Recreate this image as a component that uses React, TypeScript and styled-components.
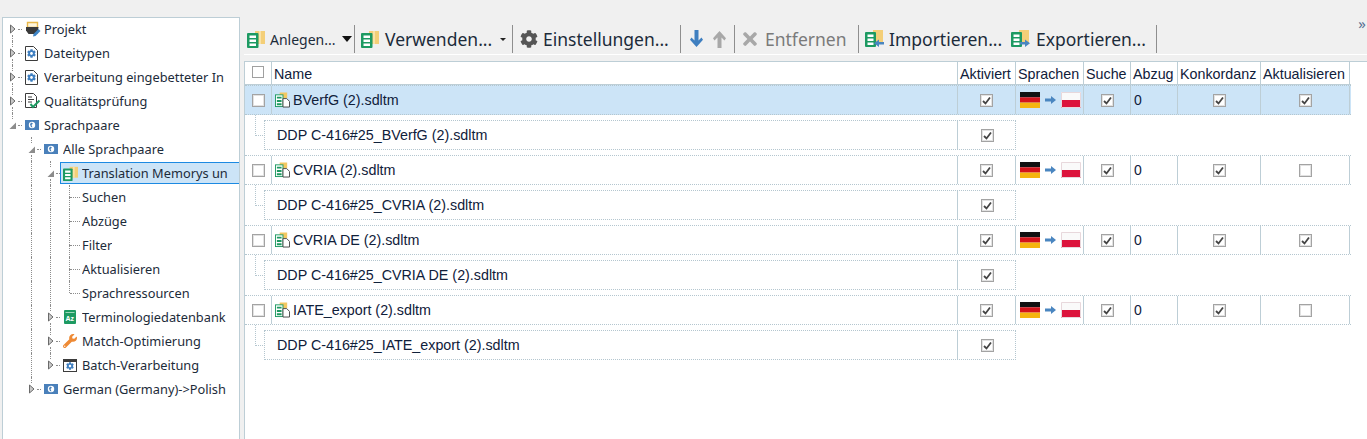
import React from "react";
import styled, { createGlobalStyle } from "styled-components";
import { FaCog, FaTimes, FaWrench } from "react-icons/fa";

const GlobalStyle = createGlobalStyle`
  html, body { margin: 0; padding: 0; background: #f0f0f0; }
  #root { height: 439px; overflow: hidden; }
`;

const UI_FONT = `"Noto Sans", "Open Sans", sans-serif`;
const TABLE_FONT = `"Liberation Sans", Arial, sans-serif`;
const BORDER = "#bdced6";
const DOTS = "#b4c6cf";
const COLUMNS = "27px 686px 58px 68px 47px 47px 83px 89px";

/* ---------- icons ---------- */

const TmIcon: React.FC<{ size?: number }> = ({ size = 18 }) => (
  <svg width={size} height={size} viewBox="0 0 18 18">
    <path d="M8 1h10v13H8z" fill="#f4cf78" />
    <path d="M12 1h2v13h-2z" fill="#f9e2a8" />
    <rect x="0" y="3" width="11.500" height="15" rx="1" fill="#1d9a62" />
    <path d="M2.500 5.500h6.500v2.500H2.500zM2.500 9.500h6.500v2.500H2.500zM2.500 13.500h6.500v2.500H2.500z" fill="#fff" />
  </svg>
);

const TmFileIcon: React.FC = () => (
  <svg width="15" height="16" viewBox="0 0 16 16">
    <path d="M5 0h8v6H5z" fill="#f3c862" />
    <rect x="0.500" y="2.500" width="8" height="12.500" fill="#fff" stroke="#1d9a62" />
    <path d="M2 4.500h5v2H2zM2 8h5v2H2zM2 11.500h5v2H2z" fill="#1d9a62" />
    <path d="M8.500 6.500h4l3 3v6h-7z" fill="#fff" stroke="#444" />
  </svg>
);

const TransferIcon: React.FC<{ dir: "in" | "out" }> = ({ dir }) => (
  <svg width="19" height="18" viewBox="0 0 19 18">
    <path d="M8 0h10v13H8z" fill="#f4cf78" />
    <rect x="0" y="2" width="11" height="15" rx="1" fill="#1d9a62" />
    <path d="M2.500 4.500h6v2.500h-6zM2.500 8.500h6v2.500h-6zM2.500 12.500h6v2.500h-6z" fill="#fff" />
    {dir === "in" ? (
      <path d="M19 12v2.500h-5v2.500l-5-3.750 5-3.750V12z" fill="#4a86c0" />
    ) : (
      <path d="M9 12v2.500h5v2.500l5-3.750-5-3.750V12z" fill="#4a86c0" />
    )}
  </svg>
);

const ProjectIcon: React.FC = () => (
  <svg width="16" height="16" viewBox="0 0 16 16">
    <path d="M2.500 1.500h10v5h-10z" fill="#fff6dc" stroke="#e9b84a" strokeWidth="1.400" />
    <path d="M1 6h12.500l-1 7H3.500L1 9.500z" fill="#3a3a3a" />
    <path d="M8.500 13l5-5 2 2-5 5-2.500.5z" fill="#3f85c5" />
  </svg>
);

const DocGearIcon: React.FC = () => (
  <IconFrame>
    <svg width="13" height="15" viewBox="0 0 13 15">
      <path d="M.5.5h8l4 4v10H.5z" fill="#fff" stroke="#3c3c3c" />
    </svg>
    <OverlayGear />
  </IconFrame>
);

const CheckDocIcon: React.FC = () => (
  <svg width="16" height="16" viewBox="0 0 16 16">
    <path d="M.5.500h8l3 3v11H.5z" fill="#fff" stroke="#3c3c3c" />
    <path d="M3 4h4M3 6.500h6M3 9h4" stroke="#3c3c3c" />
    <path d="M5.500 11l2.500 3 6.500-6.500" fill="none" stroke="#1d9a62" strokeWidth="2" />
  </svg>
);

const GlobeIcon: React.FC = () => (
  <svg width="14" height="10" viewBox="0 0 14 10">
    <rect width="14" height="10" fill="#4a80ba" />
    <circle cx="7" cy="5" r="3.200" fill="#fff" />
    <path d="M6 2.500l2 1-1.500 1.500 1 2.500-1.500-.5-1-2.500z" fill="#4a80ba" />
  </svg>
);

const TermIcon: React.FC = () => (
  <svg width="14" height="14" viewBox="0 0 14 14">
    <rect x="1" width="12" height="14" rx="1" fill="#1d9a62" />
    <path d="M2.500 2.500h9" stroke="#9fd8bb" />
    <text x="2.500" y="11" fontSize="7" fontFamily="Liberation Sans" fontWeight="700" fill="#fff">Az</text>
  </svg>
);

const BatchIcon: React.FC = () => (
  <IconFrame>
    <svg width="14" height="13" viewBox="0 0 14 13">
      <rect x=".5" y=".5" width="13" height="12" fill="#fff" stroke="#3c3c3c" />
      <path d="M0 0h14v3H0z" fill="#3c3c3c" />
    </svg>
    <BatchGear />
  </IconFrame>
);

const ThickArrow: React.FC<{ dir: "up" | "down"; color: string }> = ({ dir, color }) => (
  <svg width="13" height="18" viewBox="0 0 13 18">
    <path
      d="M4.500 0h4v10.500l3-3 1.500 2.200L6.500 17 0 9.700l1.500-2.200 3 3z"
      fill={color}
      transform={dir === "up" ? "rotate(180 6.500 9)" : undefined}
    />
  </svg>
);

const GermanFlag: React.FC = () => (
  <Flag viewBox="0 0 20 16">
    <path d="M0 0h20v5.300H0z" fill="#111" />
    <path d="M0 5.300h20v5.300H0z" fill="#d3141c" />
    <path d="M0 10.600h20V16H0z" fill="#f5b50f" />
  </Flag>
);

const PolishFlag: React.FC = () => (
  <Flag viewBox="0 0 20 16">
    <path d="M0 0h20v8H0z" fill="#fafafa" />
    <path d="M0 8h20v8H0z" fill="#dc143c" />
    <path d="M.5.500h19v15H.5z" fill="none" stroke="#e8d8dc" />
  </Flag>
);

const LangArrow: React.FC = () => (
  <svg width="11" height="8" viewBox="0 0 11 8">
    <path d="M0 2.500h6V0l5 4-5 4V5.500H0z" fill="#4a86c0" />
  </svg>
);

const Check: React.FC = () => (
  <svg width="9" height="9" viewBox="0 0 9 9">
    <path d="M1 5l2.500 2.500L8 1.500" fill="none" stroke="#444" strokeWidth="1.800" />
  </svg>
);

/* ---------- tree ---------- */

type TreeItem = {
  label: string;
  level: number;
  guides: boolean[];
  state?: "open" | "closed";
  up?: boolean;
  down?: boolean;
  icon?: React.ReactNode;
  selected?: boolean;
};

const treeItems: TreeItem[] = [
  { label: "Projekt", level: 0, guides: [], state: "closed", down: true, icon: <ProjectIcon /> },
  { label: "Dateitypen", level: 0, guides: [], state: "closed", up: true, down: true, icon: <DocGearIcon /> },
  { label: "Verarbeitung eingebetteter In", level: 0, guides: [], state: "closed", up: true, down: true, icon: <DocGearIcon /> },
  { label: "Qualitätsprüfung", level: 0, guides: [], state: "closed", up: true, down: true, icon: <CheckDocIcon /> },
  { label: "Sprachpaare", level: 0, guides: [], state: "open", up: true, icon: <GlobeIcon /> },
  { label: "Alle Sprachpaare", level: 1, guides: [false], state: "open", up: true, down: true, icon: <GlobeIcon /> },
  { label: "Translation Memorys un", level: 2, guides: [false, true], state: "open", up: true, down: true, icon: <TmIcon size={15} />, selected: true },
  { label: "Suchen", level: 3, guides: [false, true, true], up: true, down: true },
  { label: "Abzüge", level: 3, guides: [false, true, true], up: true, down: true },
  { label: "Filter", level: 3, guides: [false, true, true], up: true, down: true },
  { label: "Aktualisieren", level: 3, guides: [false, true, true], up: true, down: true },
  { label: "Sprachressourcen", level: 3, guides: [false, true, true], up: true },
  { label: "Terminologiedatenbank", level: 2, guides: [false, true], state: "closed", up: true, down: true, icon: <TermIcon /> },
  { label: "Match-Optimierung", level: 2, guides: [false, true], state: "closed", up: true, down: true, icon: <FaWrench size={14} color="#ee8a35" /> },
  { label: "Batch-Verarbeitung", level: 2, guides: [false, true], state: "closed", up: true, icon: <BatchIcon /> },
  { label: "German (Germany)->Polish", level: 1, guides: [false], state: "closed", up: true, icon: <GlobeIcon /> },
];

const Twisty: React.FC<{ state: "open" | "closed" }> = ({ state }) => (
  <TwistyBox>
    <svg width="8" height="10" viewBox="0 0 8 10">
      {state === "closed" ? (
        <path d="M1.500 1l4.500 4-4.500 4z" fill="#c8c8c8" stroke="#6a6a6a" />
      ) : (
        <path d="M7 2.500V9H.5z" fill="#8c8c8c" />
      )}
    </svg>
  </TwistyBox>
);

const TreeRow: React.FC<{ item: TreeItem }> = ({ item }) => (
  <Row>
    {item.guides.map((line, i) => (
      <Guide key={i} $line={line} />
    ))}
    <Connector>
      {item.up && <StemUp $full={!item.state} />}
      {item.down && <StemDown $full={!item.state} />}
      <Branch $leaf={!item.state} />
      {item.state && <Twisty state={item.state} />}
    </Connector>
    <Content $selected={item.selected}>
      {item.icon && <IconSlot>{item.icon}</IconSlot>}
      <Label>{item.label}</Label>
    </Content>
  </Row>
);

/* ---------- table ---------- */

type TmRow = {
  file: string;
  selected?: boolean;
  update: boolean;
};

const tmRows: TmRow[] = [
  { file: "BVerfG (2).sdltm", selected: true, update: true },
  { file: "CVRIA (2).sdltm", update: false },
  { file: "CVRIA DE (2).sdltm", update: true },
  { file: "IATE_export (2).sdltm", update: false },
];

const headers = ["Name", "Aktiviert", "Sprachen", "Suche", "Abzug", "Konkordanz", "Aktualisieren"];

const Box: React.FC<{ checked?: boolean }> = ({ checked }) => <CheckBox>{checked && <Check />}</CheckBox>;

const TmEntry: React.FC<{ row: TmRow }> = ({ row }) => (
  <>
    <ParentRow $selected={row.selected}>
      <Cell $center>
        <CheckBox />
      </Cell>
      <NameCell>
        <TmFileIcon />
        {row.file}
      </NameCell>
      <Cell $center>
        <Box checked />
      </Cell>
      <LangCell>
        <GermanFlag />
        <LangArrow />
        <PolishFlag />
      </LangCell>
      <Cell $center>
        <Box checked />
      </Cell>
      <ZeroCell>0</ZeroCell>
      <Cell $center>
        <Box checked />
      </Cell>
      <Cell $center>
        <Box checked={row.update} />
      </Cell>
    </ParentRow>
    <ChildRow>
      <ChildName>DDP C-416#25_{row.file}</ChildName>
      <Cell $center>
        <Box checked />
      </Cell>
    </ChildRow>
  </>
);

/* ---------- page ---------- */

const App: React.FC = () => (
  <Page>
    <GlobalStyle />
    <Sidebar>
      {treeItems.map((item) => (
        <TreeRow key={item.label} item={item} />
      ))}
    </Sidebar>
    <Main>
      <Toolbar>
        <ToolButton $width={88} $left={0} $gap={5} $small>
          <TmIcon />
          Anlegen...
        </ToolButton>
        <BigCaret />
        <Separator $left={2} />
        <ToolButton $width={132} $left={6} $gap={6}>
          <TmIcon />
          Verwenden...
        </ToolButton>
        <SmallCaret />
        <Separator $left={6} />
        <ToolButton $width={149} $left={7} $gap={5}>
          <FaCog size={18} color="#555" />
          Einstellungen...
        </ToolButton>
        <Separator $left={11} />
        <ArrowButton $left={4}>
          <ThickArrow dir="down" color="#3f7fc0" />
        </ArrowButton>
        <ArrowButton $left={0}>
          <ThickArrow dir="up" color="#a8a8a8" />
        </ArrowButton>
        <Separator $left={3} />
        <ToolButton $width={107} $left={5} $gap={5} $muted>
          <FaTimes size={20} color="#a8a8a8" />
          Entfernen
        </ToolButton>
        <Separator $left={11} />
        <ToolButton $width={136} $left={6} $gap={5}>
          <TransferIcon dir="in" />
          Importieren...
        </ToolButton>
        <ToolButton $width={134} $left={10} $gap={6}>
          <TransferIcon dir="out" />
          Exportieren...
        </ToolButton>
        <Separator $left={11} />
        <Overflow>»</Overflow>
      </Toolbar>
      <TablePanel>
        <HeaderRow>
          <HeaderCell $center>
            <HeaderBox />
          </HeaderCell>
          {headers.map((title) => (
            <HeaderCell key={title}>{title}</HeaderCell>
          ))}
        </HeaderRow>
        <Rows>
          {tmRows.map((row) => (
            <TmEntry key={row.file} row={row} />
          ))}
        </Rows>
      </TablePanel>
    </Main>
  </Page>
);

export default App;

/* ---------- styles ---------- */

const Page = styled.div`
  display: flex;
  height: 439px;
  background: #f0f0f0;
`;

const Sidebar = styled.div`
  box-sizing: border-box;
  flex: none;
  width: 238px;
  height: 422px;
  margin: 17px 0 0 2px;
  background: #fff;
  border: 1px solid ${BORDER};
  border-bottom: none;
  font-family: ${UI_FONT};
  font-size: 12.800px;
  color: #1c2b3a;
  overflow: hidden;
`;

const Row = styled.div`
  display: flex;
  height: 24px;
  &:first-child {
    margin-top: -1px;
  }
`;

const Guide = styled.span<{ $line?: boolean }>`
  flex: none;
  width: 19px;
  position: relative;
  &::before {
    content: ${(p) => (p.$line ? '""' : "none")};
    position: absolute;
    left: 9px;
    top: 0;
    bottom: 0;
    border-left: 1px dotted #8d8d8d;
  }
`;

const Connector = styled.span`
  flex: none;
  width: 19px;
  position: relative;
`;

const StemUp = styled.span<{ $full?: boolean }>`
  position: absolute;
  left: 9px;
  top: 0;
  height: ${(p) => (p.$full ? 12 : 6)}px;
  border-left: 1px dotted #8d8d8d;
`;

const StemDown = styled.span<{ $full?: boolean }>`
  position: absolute;
  left: 9px;
  bottom: 0;
  height: ${(p) => (p.$full ? 12 : 6)}px;
  border-left: 1px dotted #8d8d8d;
`;

const Branch = styled.span<{ $leaf?: boolean }>`
  position: absolute;
  left: ${(p) => (p.$leaf ? 10 : 15)}px;
  right: ${(p) => (p.$leaf ? -1 : 0)}px;
  top: 12px;
  border-top: 1px dotted #8d8d8d;
`;

const TwistyBox = styled.span`
  position: absolute;
  left: 6px;
  top: 7px;
  display: flex;
`;

const Content = styled.span<{ $selected?: boolean }>`
  box-sizing: border-box;
  flex: 1;
  min-width: 0;
  display: flex;
  align-items: center;
  height: ${(p) => (p.$selected ? 22 : 24)}px;
  margin-top: ${(p) => (p.$selected ? 1 : 0)}px;
  padding-left: ${(p) => (p.$selected ? 2 : 3)}px;
  background: ${(p) => (p.$selected ? "#cce4f7" : "transparent")};
  border: ${(p) => (p.$selected ? "1px solid #1c8ae2" : "none")};
  border-right: none;
`;

const IconSlot = styled.span`
  flex: none;
  display: flex;
  align-items: center;
  justify-content: flex-start;
  width: 16px;
  height: 16px;
  margin-right: 3px;
`;

const Label = styled.span`
  white-space: nowrap;
  overflow: hidden;
`;

const IconFrame = styled.span`
  position: relative;
  display: flex;
`;

const OverlayGear = styled(FaCog)`
  position: absolute;
  left: 2px;
  top: 3px;
  width: 9px;
  height: 9px;
  color: #3f7fc0;
`;

const BatchGear = styled(FaCog)`
  position: absolute;
  left: 3px;
  top: 3px;
  width: 8px;
  height: 8px;
  color: #3f7fc0;
`;

const Main = styled.div`
  flex: 1;
  min-width: 0;
  margin-left: 4px;
  display: flex;
  flex-direction: column;
`;

const Toolbar = styled.div`
  box-sizing: border-box;
  display: flex;
  align-items: center;
  flex: none;
  height: 28px;
  margin-top: 25px;
  padding-left: 3px;
  font-family: ${UI_FONT};
  color: #1c2b3a;
  position: relative;
  &::after {
    content: "";
    position: absolute;
    left: 0;
    right: 0;
    bottom: -2px;
    height: 1px;
    background: #fff;
  }
`;

const ToolButton = styled.span<{ $width: number; $left: number; $gap: number; $small?: boolean; $muted?: boolean }>`
  flex: none;
  width: ${(p) => p.$width}px;
  display: flex;
  align-items: center;
  gap: ${(p) => p.$gap}px;
  margin-left: ${(p) => p.$left}px;
  font-size: ${(p) => (p.$small ? 14 : 17.5)}px;
  color: ${(p) => (p.$muted ? "#7a7a7a" : "#1c2b3a")};
  white-space: nowrap;
  & > svg {
    flex: none;
  }
`;

const BigCaret = styled.span`
  flex: none;
  margin-left: 7px;
  border-left: 5.500px solid transparent;
  border-right: 5.500px solid transparent;
  border-top: 6px solid #111;
`;

const SmallCaret = styled.span`
  flex: none;
  margin-left: 7px;
  border-left: 3px solid transparent;
  border-right: 3px solid transparent;
  border-top: 3px solid #222;
`;

const Separator = styled.span<{ $left: number }>`
  flex: none;
  width: 1px;
  height: 28px;
  margin-left: ${(p) => p.$left}px;
  background: #8e8e8e;
`;

const ArrowButton = styled.span<{ $left: number }>`
  flex: none;
  width: 23px;
  margin-left: ${(p) => p.$left}px;
  display: flex;
  justify-content: center;
`;

const Overflow = styled.span`
  margin-left: auto;
  margin-right: 1px;
  align-self: flex-start;
  margin-top: -8px;
  font-size: 15px;
  line-height: 12px;
  color: #5a6f92;
`;

const TablePanel = styled.div`
  flex: 1;
  margin-top: 8px;
  background: #fff;
  border-top: 1px solid ${BORDER};
  border-left: 1px solid ${BORDER};
  font-family: ${TABLE_FONT};
  font-size: 14.300px;
  color: #10203a;
`;

const HeaderRow = styled.div`
  box-sizing: border-box;
  display: grid;
  grid-template-columns: ${COLUMNS};
  width: 1106px;
  height: 23px;
  border-bottom: 1px solid ${BORDER};
`;

const HeaderCell = styled.div<{ $center?: boolean }>`
  display: flex;
  align-items: center;
  justify-content: ${(p) => (p.$center ? "center" : "flex-start")};
  padding: ${(p) => (p.$center ? "0" : "2px 0 0 2px")};
  border-right: 1px solid ${BORDER};
  white-space: nowrap;
`;

const HeaderBox = styled.span`
  box-sizing: border-box;
  width: 12px;
  height: 12px;
  margin-bottom: 3px;
  border: 1px solid #a0a0a0;
  background: #fff;
`;

const Rows = styled.div`
  display: flex;
  flex-direction: column;
  gap: 5px;
`;

const ParentRow = styled.div<{ $selected?: boolean }>`
  box-sizing: border-box;
  display: grid;
  grid-template-columns: ${COLUMNS};
  width: 1106px;
  height: 30px;
  background: ${(p) => (p.$selected ? "#cce4f7" : "#fff")};
  border: 1px dotted ${DOTS};
  border-left: none;
  border-right: none;
`;

const Cell = styled.div<{ $center?: boolean }>`
  display: flex;
  align-items: center;
  justify-content: ${(p) => (p.$center ? "center" : "flex-start")};
  border-right: 1px solid ${BORDER};
  min-width: 0;
`;

const NameCell = styled(Cell)`
  gap: 3px;
  padding-left: 3px;
  white-space: nowrap;
`;

const LangCell = styled(Cell)`
  gap: 5px;
  padding-left: 4px;
`;

const ZeroCell = styled(Cell)`
  padding-left: 3px;
  font-size: 14px;
`;

const ChildRow = styled.div`
  box-sizing: border-box;
  display: grid;
  grid-template-columns: 693px 58px;
  width: 752px;
  height: 30px;
  margin-left: 19px;
  border: 1px dotted ${DOTS};
  position: relative;
  & > div:last-child {
    border-right: none;
  }
  &::before {
    content: "";
    position: absolute;
    left: -10px;
    top: -6px;
    width: 9px;
    height: 20px;
    border-left: 1px dotted ${DOTS};
    border-bottom: 1px dotted ${DOTS};
  }
`;

const ChildName = styled(Cell)`
  padding-left: 12px;
  white-space: nowrap;
`;

const CheckBox = styled.span`
  box-sizing: border-box;
  display: flex;
  align-items: center;
  justify-content: center;
  width: 13px;
  height: 13px;
  background: #fff;
  border: 1px solid #a3a3a3;
  box-shadow: inset 0 0 0 1px #e2e2e2;
`;

const Flag = styled.svg`
  width: 20px;
  height: 16px;
  flex: none;
`;
